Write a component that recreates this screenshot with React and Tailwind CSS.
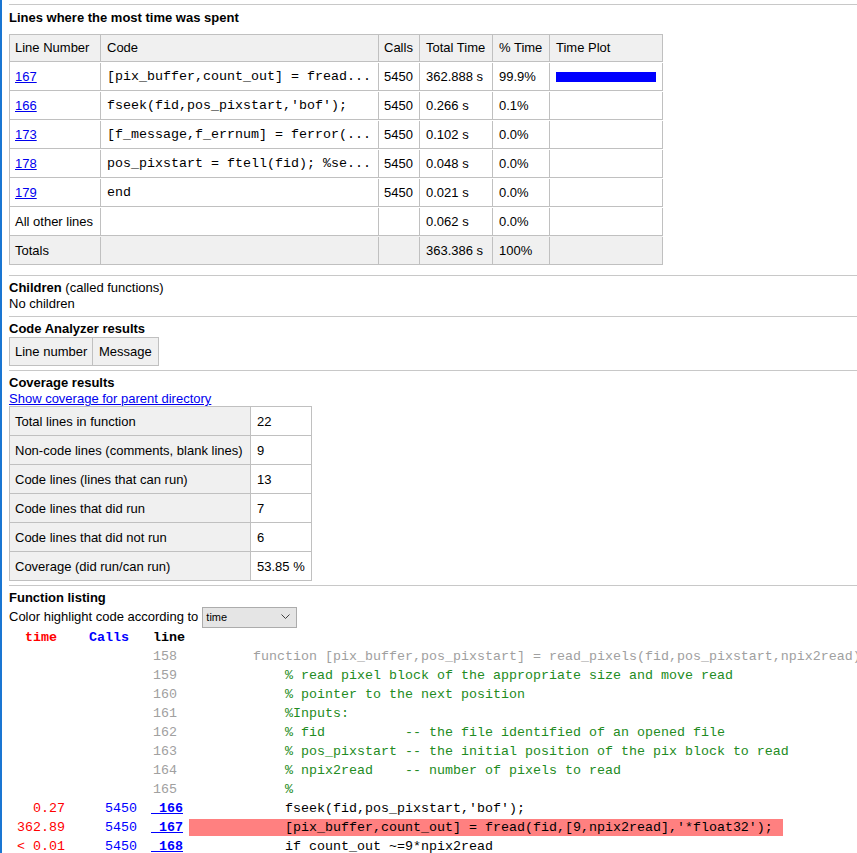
import React from "react";

const topRows = [
  { line: "167", code: "[pix_buffer,count_out] = fread...", calls: "5450", total: "362.888 s", pct: "99.9%", bar: true },
  { line: "166", code: "fseek(fid,pos_pixstart,'bof');", calls: "5450", total: "0.266 s", pct: "0.1%" },
  { line: "173", code: "[f_message,f_errnum] = ferror(...", calls: "5450", total: "0.102 s", pct: "0.0%" },
  { line: "178", code: "pos_pixstart = ftell(fid); %se...", calls: "5450", total: "0.048 s", pct: "0.0%" },
  { line: "179", code: "end", calls: "5450", total: "0.021 s", pct: "0.0%" },
];

const coverage = [
  ["Total lines in function", "22"],
  ["Non-code lines (comments, blank lines)", "9"],
  ["Code lines (lines that can run)", "13"],
  ["Code lines that did run", "7"],
  ["Code lines that did not run", "6"],
  ["Coverage (did run/can run)", "53.85 %"],
];

const listing = [
  { line: "158", code: "        function [pix_buffer,pos_pixstart] = read_pixels(fid,pos_pixstart,npix2read)", kind: "gray" },
  { line: "159", code: "            % read pixel block of the appropriate size and move read", kind: "green" },
  { line: "160", code: "            % pointer to the next position", kind: "green" },
  { line: "161", code: "            %Inputs:", kind: "green" },
  { line: "162", code: "            % fid          -- the file identified of an opened file", kind: "green" },
  { line: "163", code: "            % pos_pixstart -- the initial position of the pix block to read", kind: "green" },
  { line: "164", code: "            % npix2read    -- number of pixels to read", kind: "green" },
  { line: "165", code: "            %", kind: "green" },
  { line: "166", time: "0.27", calls: "5450", link: true, code: "            fseek(fid,pos_pixstart,'bof');", kind: "code" },
  { line: "167", time: "362.89", calls: "5450", link: true, code: "            [pix_buffer,count_out] = fread(fid,[9,npix2read],'*float32');", kind: "hl" },
  { line: "168", time: "< 0.01", calls: "5450", link: true, code: "            if count_out ~=9*npix2read", kind: "code" },
];

const Hr = ({ className = "" }) => <div className={"h-px bg-[#c8c8c8] " + className} />;

export default function App() {
  return (
    <div className="h-[853px] w-[857px] overflow-hidden bg-white border-l-2 border-[#1a76d2] pl-[7px] pt-[4px] font-['Liberation_Sans',Arial,sans-serif] text-[13px] leading-[16px] text-black">
      <Hr />
      <div className="mt-[5px] font-bold">Lines where the most time was spent</div>

      <div className="mt-[8px] w-[654px] border-l border-t border-[#c0c0c0]">
        <div className="flex h-[27px] border-b border-[#c0c0c0] bg-[#f0f0f0]">
          <div className="w-[91px] border-r border-[#c0c0c0] pl-[5px] flex items-center">Line Number</div>
          <div className="w-[278px] border-r border-[#c0c0c0] pl-[6px] flex items-center">Code</div>
          <div className="w-[41px] border-r border-[#c0c0c0] pl-[5px] flex items-center">Calls</div>
          <div className="w-[73px] border-r border-[#c0c0c0] pl-[6px] flex items-center">Total Time</div>
          <div className="w-[57px] border-r border-[#c0c0c0] pl-[6px] flex items-center">% Time</div>
          <div className="w-[113px] border-r border-[#c0c0c0] pl-[6px] flex items-center">Time Plot</div>
        </div>
        {topRows.map((r) => (
          <div key={r.line} className="flex h-[29px] border-b border-[#c0c0c0] pt-[1px]">
            <div className="w-[91px] border-r border-[#c0c0c0] pl-[5px] flex items-center">
              <a href="#" className="text-[#0000ee] underline">{r.line}</a>
            </div>
            <div className="w-[278px] border-r border-[#c0c0c0] pl-[6px] flex items-center whitespace-pre font-['Liberation_Mono','Courier_New',monospace] text-[13.333px]">{r.code}</div>
            <div className="w-[41px] border-r border-[#c0c0c0] pl-[5px] flex items-center">{r.calls}</div>
            <div className="w-[73px] border-r border-[#c0c0c0] pl-[6px] flex items-center">{r.total}</div>
            <div className="w-[57px] border-r border-[#c0c0c0] pl-[6px] flex items-center">{r.pct}</div>
            <div className="w-[113px] border-r border-[#c0c0c0] pl-[6px] flex items-center">
              {r.bar && <div className="h-[10px] w-[100px] bg-[#0000ff]" />}
            </div>
          </div>
        ))}
        <div className="flex h-[29px] border-b border-[#c0c0c0] pt-[1px]">
          <div className="w-[91px] border-r border-[#c0c0c0] pl-[5px] flex items-center">All other lines</div>
          <div className="w-[278px] border-r border-[#c0c0c0]" />
          <div className="w-[41px] border-r border-[#c0c0c0]" />
          <div className="w-[73px] border-r border-[#c0c0c0] pl-[6px] flex items-center">0.062 s</div>
          <div className="w-[57px] border-r border-[#c0c0c0] pl-[6px] flex items-center">0.0%</div>
          <div className="w-[113px] border-r border-[#c0c0c0]" />
        </div>
        <div className="flex h-[29px] border-b border-[#c0c0c0] bg-[#f0f0f0] pt-[1px]">
          <div className="w-[91px] border-r border-[#c0c0c0] pl-[5px] flex items-center">Totals</div>
          <div className="w-[278px] border-r border-[#c0c0c0]" />
          <div className="w-[41px] border-r border-[#c0c0c0]" />
          <div className="w-[73px] border-r border-[#c0c0c0] pl-[6px] flex items-center">363.386 s</div>
          <div className="w-[57px] border-r border-[#c0c0c0] pl-[6px] flex items-center">100%</div>
          <div className="w-[113px] border-r border-[#c0c0c0]" />
        </div>
      </div>

      <Hr className="mt-[10px]" />
      <div className="mt-[4px]"><span className="font-bold">Children</span> (called functions)</div>
      <div>No children</div>

      <Hr className="mt-[4px]" />
      <div className="mt-[4px] font-bold">Code Analyzer results</div>
      <div className="flex w-[150px] h-[29px] border border-[#c0c0c0] bg-[#f0f0f0]">
        <div className="w-[83px] border-r border-[#c0c0c0] pl-[5px] flex items-center">Line number</div>
        <div className="flex-1 pl-[6px] flex items-center">Message</div>
      </div>

      <Hr className="mt-[4px]" />
      <div className="mt-[4px] font-bold">Coverage results</div>
      <a href="#" className="block w-fit text-[#0000ee] underline">Show coverage for parent directory</a>
      <div className="-mt-px w-[303px] border-l border-t border-[#c0c0c0]">
        {coverage.map(([k, v]) => (
          <div key={k} className="flex h-[29px] border-b border-[#c0c0c0]">
            <div className="w-[241px] bg-[#f0f0f0] border-r border-[#c0c0c0] pl-[5px] flex items-center pt-[1px]">{k}</div>
            <div className="w-[61px] border-r border-[#c0c0c0] pl-[6px] flex items-center pt-[1px]">{v}</div>
          </div>
        ))}
      </div>

      <Hr className="mt-[4px]" />
      <div className="mt-[4px] font-bold">Function listing</div>
      <div className="flex items-center h-[22px]">
        <span>Color highlight code according to</span>
        <div className="ml-[4px] flex h-[21px] w-[95px] items-center justify-between border border-[#acacac] bg-[#e5e5e5] pl-[3px] pr-[6px] text-[11px]">
          <span>time</span>
          <svg width="9" height="6" viewBox="0 0 9 6" fill="none">
            <polyline points="0.5,0.5 4.5,4.5 8.5,0.5" stroke="#404040" strokeWidth="1" />
          </svg>
        </div>
      </div>

      <div className="font-['Liberation_Mono','Courier_New',monospace] text-[13.333px] leading-[19px]">
        <div className="h-[19px] whitespace-pre font-bold">
          {"  "}<span className="text-[#ff0000]">time</span>{"    "}<span className="text-[#0000ff]">Calls</span>{"   "}<span className="text-black">line</span>
        </div>
        {listing.map((l) => (
          <div key={l.line} className="flex h-[19px] items-center whitespace-pre">
            <div className="w-[56px] shrink-0 text-right text-[#ff0000]">{l.time || ""}</div>
            <div className="w-[72px] shrink-0 text-right text-[#0000ff]">{l.calls || ""}</div>
            <div className="w-[52px] shrink-0">
              {l.link ? (
                <a href="#" className="ml-[14px] font-bold text-[#0000ff] underline">{"\u00a0" + l.line}</a>
              ) : (
                <span className="ml-[16px] text-[#a0a0a0]">{l.line}</span>
              )}
            </div>
            {l.kind === "hl" ? (
              <div className="shrink-0 h-[17px] w-[594px] bg-[#ff8080] leading-[17px] text-black">{l.code}</div>
            ) : (
              <div
                className={
                  "shrink-0 " +
                  (l.kind === "gray" ? "text-[#a0a0a0]" : l.kind === "green" ? "text-[#228b22]" : "text-black")
                }
              >
                {l.code}
              </div>
            )}
          </div>
        ))}
      </div>
    </div>
  );
}
